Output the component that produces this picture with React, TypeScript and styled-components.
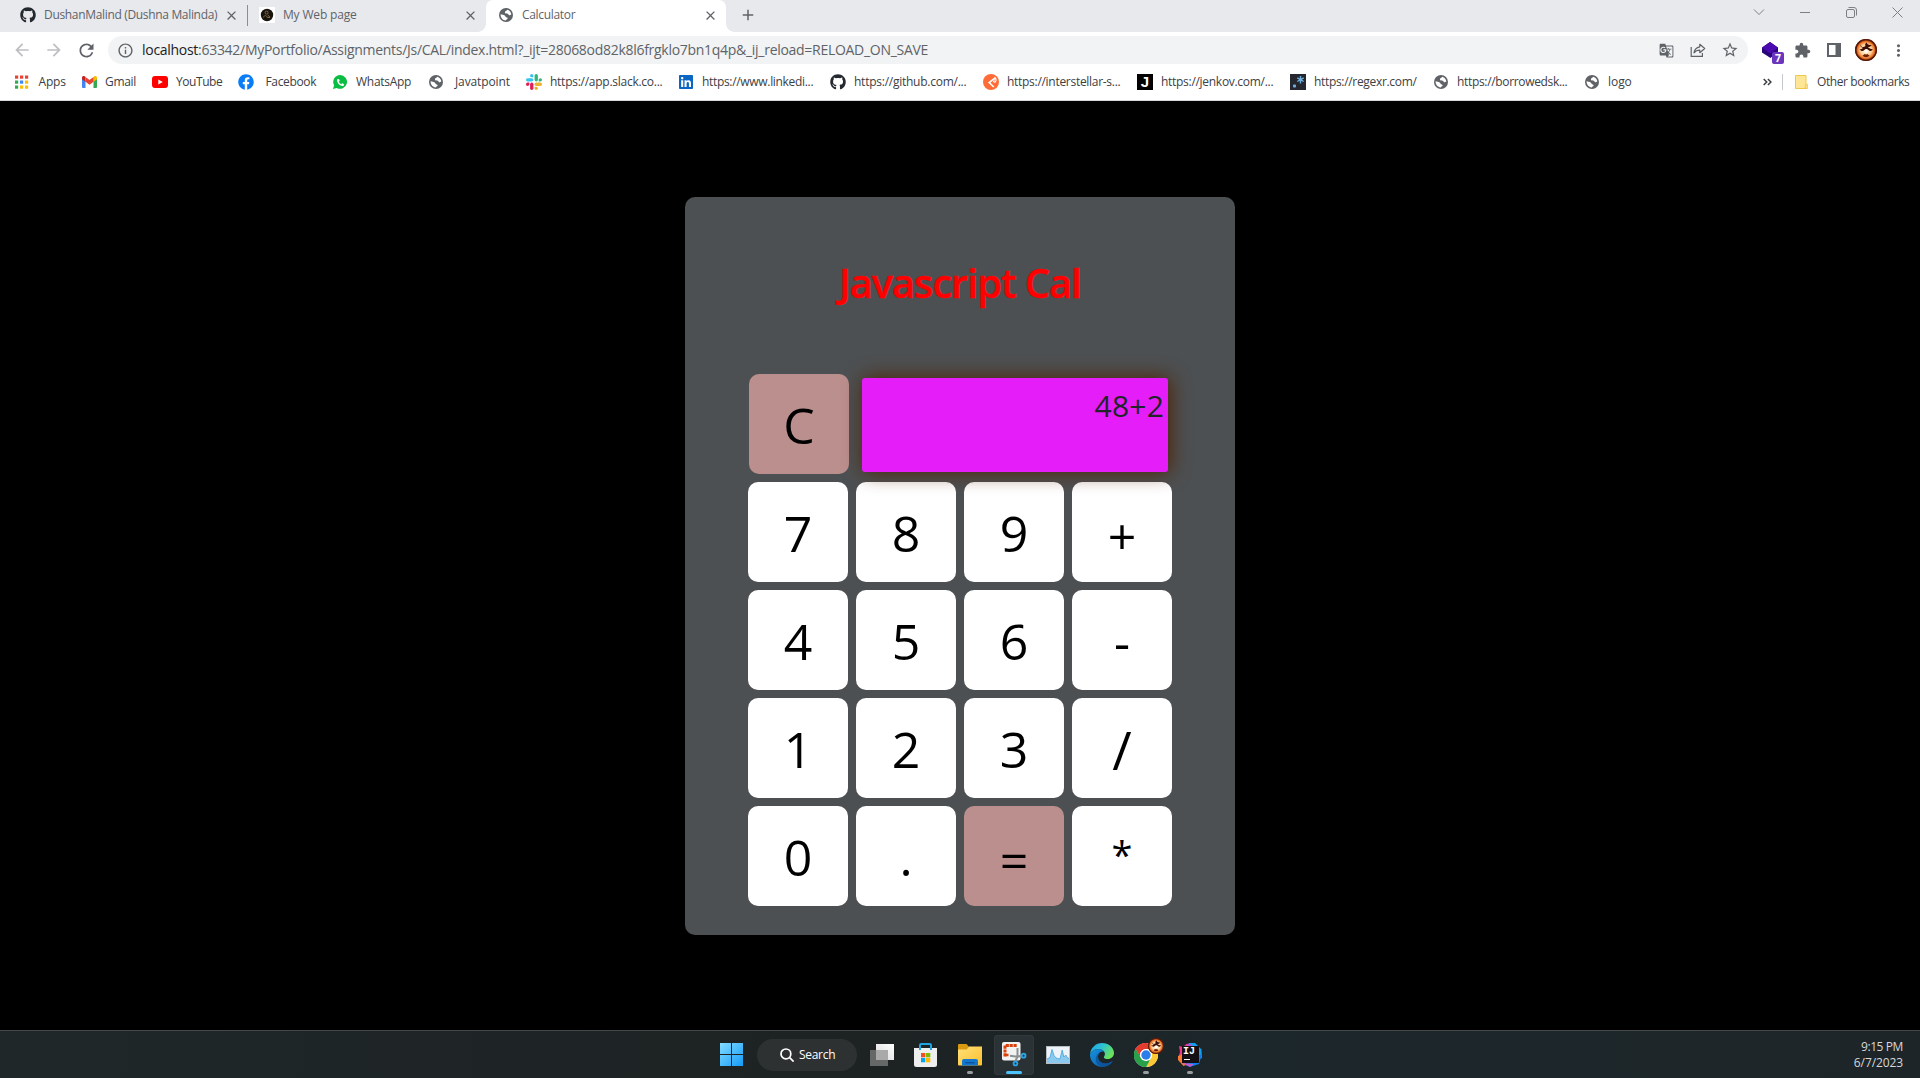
import React from "react";
import styled, { createGlobalStyle, css } from "styled-components";
import {
  MdAdd,
  MdArrowBack,
  MdArrowForward,
  MdClose,
  MdExtension,
  MdGTranslate,
  MdInfoOutline,
  MdMoreVert,
  MdRefresh,
  MdStarBorder,
} from "react-icons/md";
import { FaFacebook, FaGithub, FaLinkedin, FaPhoneAlt } from "react-icons/fa";

const uiFont = `"Segoe UI", "Open Sans", "Noto Sans", sans-serif`;

const GlobalStyle = createGlobalStyle`
  * { box-sizing: border-box; }
  body { margin: 0; background: #000; font-family: ${uiFont}; }
  svg { display: block; flex: none; }
`;

const Screen = styled.div`
  display: flex;
  flex-direction: column;
  height: 1078px;
  overflow: hidden;
  background: #000;
`;

/* ---------- browser window ---------- */

const Browser = styled.header`
  display: flex;
  flex-direction: column;
  height: 101px;
  background: #fff;
  border-bottom: 1px solid #d5d7da;
  color: #5f6368;
`;

const TabStrip = styled.div`
  display: flex;
  height: 32px;
  padding-left: 8px;
  background: #e8e9ed;
`;

const Tab = styled.div<{ $active?: boolean; $divided?: boolean }>`
  position: relative;
  display: flex;
  align-items: center;
  width: ${(p) => (p.$active ? 240 : 239)}px;
  height: 32px;
  padding: 0 7px 2px 12px;
  ${(p) =>
    p.$divided &&
    css`
      &::before {
        content: "";
        position: absolute;
        left: 0;
        top: 5px;
        width: 1px;
        height: 21px;
        background: #8a8d91;
      }
    `}
  ${(p) =>
    p.$active &&
    css`
      background: #fff;
      border-radius: 7px 7px 0 0;
      &::before,
      &::after {
        content: "";
        position: absolute;
        bottom: 0;
        width: 8px;
        height: 8px;
      }
      &::before {
        left: -8px;
        background: radial-gradient(circle at 0 0, transparent 7.5px, #fff 8px);
      }
      &::after {
        right: -8px;
        background: radial-gradient(circle at 100% 0, transparent 7.5px, #fff 8px);
      }
    `}
`;

const Favicon = styled.span`
  display: flex;
  align-items: center;
  justify-content: center;
  flex: none;
  width: 16px;
  height: 16px;
`;

const TabTitle = styled.span<{ $tracking: number }>`
  flex: 1;
  margin-left: 8px;
  font-size: 12px;
  line-height: 16px;
  letter-spacing: ${(p) => p.$tracking}px;
  white-space: nowrap;
`;

const CloseTab = styled.span`
  display: flex;
  flex: none;
  margin-right: 1px;
`;

const NewTab = styled.div`
  display: flex;
  align-items: center;
  justify-content: center;
  width: 44px;
  height: 30px;
`;

const WindowButtons = styled.div`
  display: flex;
  align-items: center;
  height: 24px;
  margin-left: auto;
  color: #7d8083;
`;

const WindowButton = styled.span`
  display: flex;
  justify-content: center;
  width: 46px;
`;

const Toolbar = styled.div`
  display: flex;
  align-items: center;
  height: 36px;
  padding: 0 6px;
`;

const Tool = styled.span<{ $muted?: boolean }>`
  position: relative;
  display: flex;
  align-items: center;
  justify-content: center;
  flex: none;
  width: 32px;
  height: 28px;
  color: ${(p) => (p.$muted ? "#bcbec0" : "#5f6368")};
`;

const AddressBar = styled.div`
  display: flex;
  align-items: center;
  flex: 1;
  height: 28px;
  margin: 0 6px;
  padding: 0 2px 0 9px;
  border-radius: 14px;
  background: #f1f3f4;
`;

const Address = styled.span`
  flex: 1;
  margin-left: 8px;
  font-size: 14px;
  line-height: 20px;
  letter-spacing: -0.287px;
  white-space: nowrap;
`;

const Host = styled.span`
  color: #202124;
`;

const ExtensionBadge = styled.span`
  position: absolute;
  left: 18px;
  top: 16px;
  width: 12px;
  height: 12px;
  border-radius: 2px;
  background: #6b35bd;
  color: #fff;
  font-size: 10.5px;
  font-weight: 700;
  line-height: 12px;
  text-align: center;
`;

const Bookmarks = styled.nav`
  display: flex;
  align-items: center;
  height: 28px;
  padding: 0 9px 0 14px;
`;

const Bookmark = styled.a<{ $width: number; $tracking: number; $indent?: number }>`
  display: flex;
  align-items: center;
  flex: none;
  gap: ${(p) => p.$indent ?? 8}px;
  width: ${(p) => p.$width}px;
  color: #3c4043;
  font-size: 12px;
  line-height: 16px;
  letter-spacing: ${(p) => p.$tracking}px;
  white-space: nowrap;
`;

const MoreBookmarks = styled.div`
  display: flex;
  align-items: center;
  margin-left: auto;
`;

const Divider = styled.span`
  width: 1px;
  height: 16px;
  margin: 0 12px 0 10px;
  background: #c4c7cb;
`;

const FolderLabel = styled.span`
  margin-left: 9px;
`;

const JenkovIcon = styled.span`
  width: 16px;
  height: 16px;
  background: #000;
  color: #fff;
  font: 700 15px/16px "Liberation Sans", sans-serif;
  letter-spacing: 0;
  text-align: center;
`;

/* ---------- calculator ---------- */

const Page = styled.main`
  display: flex;
  flex: 1;
  align-items: flex-start;
  justify-content: center;
  padding-top: 96px;
  background: #000;
`;

const Calculator = styled.section`
  width: 550px;
  height: 738px;
  padding: 59px 63px 0;
  border-radius: 10px;
  background: #4d5052;
`;

const Title = styled.h1`
  margin: 0 0 64px;
  color: #f00;
  font-size: 40px;
  font-weight: 600;
  line-height: 54px;
  letter-spacing: -1.17px;
  text-align: center;
  white-space: nowrap;
  -webkit-text-stroke: 0.4px #f00;
`;

const DisplayRow = styled.div`
  display: flex;
  gap: 13px;
  height: 108px;
  padding-left: 1px;
`;

const Keypad = styled.div`
  display: grid;
  grid-template-columns: repeat(4, 100px);
  gap: 8px;
`;

const Key = styled.button<{ $accent?: boolean; $drop?: number; $size?: number }>`
  display: flex;
  align-items: flex-start;
  justify-content: center;
  width: 100px;
  height: 100px;
  padding: ${(p) => 20 + (p.$drop ?? 1)}px 0 0;
  border: 0;
  border-radius: 10px;
  background: ${(p) => (p.$accent ? "#bc8f8f" : "#fff")};
  color: #000;
  font-family: ${uiFont};
  font-size: ${(p) => p.$size ?? 50}px;
  line-height: 60px;
`;

const Display = styled.output`
  position: relative;
  z-index: 1;
  width: 306px;
  height: 94px;
  margin-top: 4px;
  padding-right: 4px;
  border-radius: 3px;
  background: #e51df8;
  box-shadow: 2px 0 20px rgb(79, 32, 2);
  color: #212529;
  font-size: 30px;
  line-height: 55px;
  letter-spacing: 0.2px;
  text-align: right;
`;

/* ---------- taskbar ---------- */

const Taskbar = styled.footer`
  display: flex;
  align-items: center;
  height: 48px;
  padding: 0 17px 0 709px;
  border-top: 1px solid #454849;
  background: linear-gradient(90deg, #1f2729 0%, #1d2222 45%, #1c272b 65%, #1e2528 100%);
`;

const TaskItem = styled.div<{ $running?: boolean; $active?: boolean }>`
  position: relative;
  display: flex;
  align-items: center;
  justify-content: center;
  width: 44px;
  height: 47px;
  ${(p) =>
    p.$active &&
    css`
      width: 40px;
      height: 40px;
      margin: 0 2px;
      border-radius: 4px;
      background: #2a3235;
      box-shadow: inset 0 0 0 1px #32393c;
    `}
  ${(p) =>
    (p.$running || p.$active) &&
    css`
      &::after {
        content: "";
        position: absolute;
        bottom: ${p.$active ? 1 : 4}px;
        left: calc(50% - ${p.$active ? 8 : 3}px);
        width: ${p.$active ? 16 : 6}px;
        height: 3px;
        border-radius: 2px;
        background: ${p.$active ? "#4cc2ff" : "#9a9d9e"};
      }
    `}
`;

const Search = styled.div`
  display: flex;
  align-items: center;
  width: 100px;
  height: 32px;
  margin: 0 3px 0 4px;
  padding-left: 23px;
  gap: 5px;
  border-radius: 16px;
  background: #2d3132;
  color: #fff;
  font-size: 12px;
  letter-spacing: -0.3px;
`;

const Clock = styled.div`
  display: flex;
  flex-direction: column;
  align-items: flex-end;
  margin-left: auto;
  color: #d6d8d9;
  font-size: 12px;
  line-height: 16px;
  letter-spacing: -0.1px;
`;

const ClockTime = styled.span`
  letter-spacing: -0.4px;
`;

/* ---------- drawings ---------- */

const GlobeIcon = () => (
  <svg width="14" height="14" viewBox="0 0 14 14">
    <circle cx="7" cy="7" r="7" fill="#5f6368" />
    <path
      d="M8.200 1.800c-.5 1.100-2.300 1.300-2.300 2.700 0 1.200 1.700 1 2.800 1.200.9.200.6 1.500 1.600 1.600.8.100 1-.5 2-.5-.1-2.500-1.800-4.500-4.100-5zM1.600 6.300c1.400.6 2.900.4 4.100 1.200 1 .7.600 1.500 1.500 1.800.8.300 1.500.3 1.400 1.200-.1.900-1.500.9-1.800 1.900-3.100-.1-5.400-2.900-5.200-6.100z"
      fill="#fff"
    />
  </svg>
);

const WebPageIcon = () => (
  <svg width="16" height="16" viewBox="0 0 16 16">
    <rect width="16" height="16" fill="#fff" />
    <circle cx="8" cy="8" r="6.2" fill="#17130f" />
    <circle cx="7.6" cy="5.6" r="1.5" fill="none" stroke="#85683c" />
    <path d="M4.3 10.5c1.2-2.6 3-2.6 4 0h2.8M8.7 8.2l2.4 1.6" fill="none" stroke="#85683c" />
  </svg>
);

const AppsIcon = () => {
  const colors = ["#ea4335", "#ea4335", "#ea4335", "#34a853", "#4285f4", "#fbbc04", "#34a853", "#fbbc04", "#fbbc04"];
  return (
    <svg width="15" height="14" viewBox="0 0 15 14">
      {colors.map((c, i) => (
        <rect key={i} x={(i % 3) * 5} y={0.5 + Math.floor(i / 3) * 5} width="3.2" height="3.2" fill={c} />
      ))}
    </svg>
  );
};

const GmailIcon = () => (
  <svg width="15" height="12" viewBox="0 0 15 12">
    <path d="M0 2v9a1 1 0 0 0 1 1h2.5V4.5z" fill="#4285f4" />
    <path d="M15 2v9a1 1 0 0 1-1 1h-2.500V4.500z" fill="#34a853" />
    <path d="M11.500 1v4.800L15 3.200V1.800c0-1.600-1.800-2.200-2.900-1.300z" fill="#fbbc04" />
    <path d="M0 1.800v1.400l3.500 2.600V1L2.900.5C1.800-.4 0 .2 0 1.800z" fill="#c5221f" />
    <path d="M3.500 1l4 3 4-3v4.800l-4 3-4-3z" fill="#ea4335" />
  </svg>
);

const YouTubeIcon = () => (
  <svg width="16" height="12" viewBox="0 0 16 12">
    <rect width="16" height="12" rx="3" fill="#f00" />
    <path d="M6.300 3.400v5.200L10.800 6z" fill="#fff" />
  </svg>
);

const BubbleWrap = styled.span`
  display: grid;
  place-items: center;
  color: #fff;
  & > svg {
    grid-area: 1 / 1;
  }
`;

const WhatsAppIcon = () => (
  <BubbleWrap>
    <svg width="14" height="14" viewBox="0 0 14 14">
      <path d="M7.100 0a6.900 6.900 0 1 1-3.300 12.950L0 14l1.100-3.700A6.900 6.900 0 0 1 7.100 0z" fill="#0cbd44" />
    </svg>
    <FaPhoneAlt size={7} />
  </BubbleWrap>
);

const SlackIcon = () => (
  <svg width="16" height="16" viewBox="0 0 16 16">
    <g fill="#36c5f0">
      <rect x="0" y="4.200" width="7.300" height="3.300" rx="1.650" />
      <path d="M5.700 0a1.650 1.650 0 0 1 1.650 1.650V3.300H5.700a1.650 1.650 0 0 1 0-3.300z" />
    </g>
    <g fill="#2eb67d">
      <rect x="8.600" y="0" width="3.300" height="7.400" rx="1.650" />
      <path d="M16 5.800a1.650 1.650 0 0 1-1.650 1.650H12.700V5.800a1.650 1.650 0 0 1 3.300 0z" />
    </g>
    <g fill="#ecb22e">
      <rect x="8.600" y="8.600" width="7.400" height="3.300" rx="1.650" />
      <path d="M10.250 16A1.650 1.650 0 0 1 8.600 14.350V12.700h1.650a1.650 1.650 0 0 1 0 3.300z" />
    </g>
    <g fill="#e01e5a">
      <rect x="4.100" y="8.600" width="3.300" height="7.400" rx="1.650" />
      <path d="M0 10.250A1.650 1.650 0 0 1 1.650 8.600H3.300v1.650a1.650 1.650 0 0 1-3.300 0z" />
    </g>
  </svg>
);

const PostmanIcon = () => (
  <svg width="16" height="16" viewBox="0 0 16 16">
    <circle cx="8" cy="8" r="8" fill="#ff6c37" />
    <path d="M12.500 3.500L6.200 8.600l4.600 4.400" fill="none" stroke="#fff" strokeWidth="1.600" />
    <path d="M12.500 3.500c1.700 1.200 1.500 4.300-.6 5.600L9.800 7.800z" fill="#fff" />
    <path d="M12.300 5.600l-.6 1.900" stroke="#ff6c37" strokeWidth="1" />
  </svg>
);

const RegexrIcon = () => (
  <svg width="16" height="16" viewBox="0 0 16 16">
    <rect width="16" height="16" fill="#24272d" />
    <rect x="3" y="10.500" width="3" height="3" rx=".8" fill="#70b0e0" />
    <path d="M10.500 2v7.400M7.300 3.800l6.400 3.700M13.700 3.800L7.300 7.500" stroke="#70b0e0" strokeWidth="1.400" />
  </svg>
);

const FolderIcon = () => (
  <svg width="13" height="14" viewBox="0 0 13 14">
    <path d="M.5.500h10.500v8.700h1.300v4.300H.500z" fill="#ffe596" stroke="#edc84e" />
    <path d="M10.300 13.500V9.500" stroke="#edc84e" />
  </svg>
);

const ShareIcon = () => (
  <svg width="16" height="16" viewBox="0 0 16 16" fill="none" stroke="#5f6368" strokeWidth="1.200">
    <path d="M1.200 5v9.400h11.200V11" />
    <path d="M9.800 2.300l4.900 4.200-4.900 4.200V8.200C7.200 8.200 5.500 9 4 10.900c.4-3.200 2.300-5.500 5.800-6.100z" strokeLinejoin="round" />
  </svg>
);

const CubeIcon = () => (
  <svg width="16" height="16" viewBox="0 0 16 16">
    <path d="M0 5.500L8 0l8 5.500v4.200L8.500 16 0 10.500z" fill="#2a067b" />
    <path d="M0 5.700L8 0l8 5.700-7.800 5.800z" fill="#4b0ab0" />
  </svg>
);

const SidePanelIcon = () => (
  <svg width="14" height="14" viewBox="0 0 14 14">
    <path d="M0 0h14v14H0zM2 2v10h6.500V2z" fill="#5f6368" fillRule="evenodd" />
  </svg>
);

const Avatar = ({ size, id }: { size: number; id: string }) => (
  <svg width={size} height={size} viewBox="0 0 22 22">
    <defs>
      <radialGradient id={id}>
        <stop offset="0" stopColor="#fff6df" />
        <stop offset=".5" stopColor="#ffd3a0" />
        <stop offset=".75" stopColor="#f07a2a" />
        <stop offset="1" stopColor="#5a1604" />
      </radialGradient>
    </defs>
    <circle cx="11" cy="11" r="11" fill={`url(#${id})`} />
    <circle cx="11" cy="11" r="10.300" fill="none" stroke="#5a1807" strokeWidth="1.300" />
    <path d="M5 5.500c2 3.500 3.700 2.800 5.500 1.600C9.700 5.500 10.200 4.300 12 3.500c-.4 2 2.500 2.800 4.700 2.600-1 1.500-2.300 2.200-3.900 2.100 1.900 1.200 3.400 2.300 4.900 1.800-1 2.400-2.900 2.700-4.200 1-1-1.300-3.200-1.300-4.200.1-1.300 1.700-3.600 1.200-4.700-1 1.600.3 2.800-.3 3.400-1.300C6.500 8.500 5.200 7.500 5 5.500z" fill="#3a0f06" />
    <path d="M7.500 16.500c1 0 1.600-1.500 2.500-1.500.7.8 1.500.8 2.100 0 1 .2 1.500 1.500 2.500 1.500-1.600 2.200-5.500 2.300-7.100 0z" fill="#6e1f08" />
    <path d="M9.300 11.500c1.200-1.400 2.500-1.100 3.500.2l-.5 2H9.800z" fill="#fff" />
  </svg>
);

const StartIcon = () => (
  <svg width="23" height="23" viewBox="0 0 23 23">
    <defs>
      <linearGradient id="start" x1="0" y1="0" x2="1" y2="1">
        <stop offset="0" stopColor="#83dcff" />
        <stop offset="1" stopColor="#149bf8" />
      </linearGradient>
    </defs>
    <path d="M0 0h11v11H0zM12 0h11v11H12zM0 12h11v11H0zM12 12h11v11H12z" fill="url(#start)" />
  </svg>
);

const SearchIcon = () => (
  <svg width="14" height="14" viewBox="0 0 14 14" fill="none" stroke="#fff" strokeWidth="1.700">
    <circle cx="5.900" cy="5.900" r="4.900" />
    <path d="M9.400 9.400l4.200 4.200" />
  </svg>
);

const TaskViewIcon = () => (
  <svg width="24" height="22" viewBox="0 0 24 22">
    <defs>
      <linearGradient id="tv" x1="1" y1="0" x2="0" y2="1">
        <stop offset="0" stopColor="#fff" />
        <stop offset="1" stopColor="#d8d8d8" />
      </linearGradient>
    </defs>
    <rect x="0" y="6" width="18" height="16" fill="#666868" />
    <rect x="6" y="0" width="18" height="16" fill="url(#tv)" />
    <rect x="6" y="6" width="12" height="10" fill="#a9a9a9" />
  </svg>
);

const StoreIcon = () => (
  <svg width="24" height="24" viewBox="0 0 24 24">
    <path d="M0 5h23v16.500A2.500 2.500 0 0 1 20.500 24h-18A2.500 2.500 0 0 1 0 21.500z" fill="#eee" />
    <path d="M6 7V2.200C6 1.500 6.500 1 7.200 1h8.600c.7 0 1.200.5 1.200 1.200V7" fill="none" stroke="#1fa6e2" strokeWidth="2" />
    <rect x="7" y="10" width="4.300" height="4.300" fill="#f25022" />
    <rect x="12" y="10" width="4.300" height="4.300" fill="#7fba00" />
    <rect x="7" y="15" width="4.300" height="4.300" fill="#00a4ef" />
    <rect x="12" y="15" width="4.300" height="4.300" fill="#ffb900" />
  </svg>
);

const ExplorerIcon = () => (
  <svg width="24" height="22" viewBox="0 0 24 22">
    <defs>
      <linearGradient id="fold" x1="0" y1="0" x2="1" y2="1">
        <stop offset="0" stopColor="#ffe07a" />
        <stop offset="1" stopColor="#fbc02d" />
      </linearGradient>
    </defs>
    <path d="M0 1.200C0 .5.500 0 1.200 0h7.300l2.200 2.500v4H0z" fill="#d99a10" />
    <path d="M0 5.500h8.800L11 2.500h13V20.500a1 1 0 0 1-1 1H1a1 1 0 0 1-1-1z" fill="url(#fold)" />
    <path d="M4 17a2 2 0 0 1 2-2h12a2 2 0 0 1 2 2v4.600H4z" fill="#1477cf" />
    <rect x="7.500" y="18" width="9" height="1.400" fill="#0b5396" />
  </svg>
);

const SnipIcon = () => (
  <svg width="26" height="25" viewBox="0 0 26 25">
    <rect x="1" y="0" width="18.500" height="18.500" rx="2" fill="#f2f2f2" />
    <path d="M4 14.500V3.500h12" fill="none" stroke="#d9400b" strokeWidth="3" strokeDasharray="3.200 .7" />
    <path d="M4 13h3.500" stroke="#d9400b" strokeWidth="2.500" />
    <path d="M16.500 6v8.500l-2 4.500M9 13.800l7.500 1 4-1" fill="none" stroke="#8a8f92" strokeWidth="2" />
    <circle cx="22.600" cy="13.700" r="1.900" fill="none" stroke="#2aa4e5" strokeWidth="1.900" />
    <circle cx="14.500" cy="21.500" r="1.900" fill="none" stroke="#2aa4e5" strokeWidth="1.900" />
  </svg>
);

const MonitorIcon = () => (
  <svg width="24" height="18" viewBox="0 0 24 18">
    <rect x=".5" y=".5" width="23" height="17" fill="#edf3f8" stroke="#b6bdc3" />
    <path d="M1 17V13l3-1.500L6 3.500l2 6 1.500 2 2 1 2.500.5L16.200 4l1.600 7 2-2 1.700 3 1.500.5V17z" fill="#8cc9ee" />
    <path d="M1 13l3-1.500L6 3.500l2 6 1.500 2 2 1 2.500.5L16.200 4l1.600 7 2-2 1.700 3 1.500.5" fill="none" stroke="#4ea8dc" strokeWidth=".9" />
  </svg>
);

const EdgeIcon = () => (
  <svg width="24" height="24" viewBox="0 0 24 24">
    <defs>
      <linearGradient id="edgeTop" x1="0" y1="0" x2="1" y2=".5">
        <stop offset="0" stopColor="#1e9fe4" />
        <stop offset=".5" stopColor="#2cc3d2" />
        <stop offset="1" stopColor="#6ce15a" />
      </linearGradient>
      <linearGradient id="edgeLow" x1="0" y1="0" x2="1" y2="1">
        <stop offset="0" stopColor="#1691df" />
        <stop offset="1" stopColor="#0c59a4" />
      </linearGradient>
    </defs>
    <path d="M.1 11C.8 4.700 5.700 0 12 0c6.800 0 12 4.600 12 10 0 3.600-2.800 6-6.200 6-2.600 0-4-.9-4-1.800 0-.6 1.100-1.100 1.100-3.100C14.900 8.200 11.800 6 8.500 6 4.500 6 1.500 8 .1 11z" fill="url(#edgeTop)" />
    <path d="M.1 11C1.500 8 4.500 6 8.500 6c2.500 0 4.600 1.200 5.700 2.900C12.800 7.700 8.700 8.600 8 13c-.6 4.400 3.500 8.300 8.500 7.400 2.500-.4 4.200-1.300 5.500-1.900.4-.1.700.2.400.6C20.200 22.200 16.500 24 12 24 5.400 24-.5 18.500.1 11z" fill="url(#edgeLow)" />
    <path d="M8 13c-.6 4.400 3.500 8.300 8.500 7.400 2.500-.4 4.200-1.300 5.500-1.900.4-.1.700.2.400.6C20.200 22.200 16.500 24 12.500 24 8.500 23.500 5.500 20 5.800 15.500c.2-3.300 2.700-5.800 5-7C9.500 9.500 8.300 11 8 13z" fill="#0b4f97" opacity=".75" />
  </svg>
);

const ChromeWrap = styled.span`
  position: relative;
  display: flex;
`;

const ChromeBadge = styled.span`
  position: absolute;
  left: 14px;
  top: -5px;
`;

const ChromeIcon = () => (
  <ChromeWrap>
    <svg width="24" height="24" viewBox="0 0 24 24">
      <circle cx="12" cy="12" r="12" fill="#fff" />
      <path d="M12 0a12 12 0 0 1 10.400 6H12a6 6 0 0 0-5.200 3L1.600 6A12 12 0 0 1 12 0z" fill="#e33b2e" />
      <path d="M1.600 6l5.200 9L12 18l5.200-3L12 24A12 12 0 0 1 1.600 6z" fill="#2aa04b" />
      <path d="M22.400 6A12 12 0 0 1 12 24l5.200-9A6 6 0 0 0 12 6z" fill="#fcc934" />
      <path d="M1.600 6A12 12 0 0 1 12 0v6a6 6 0 0 0-5.200 9z" fill="#e33b2e" />
      <path d="M1.600 6A12 12 0 0 0 12 24l3-5.200A6 6 0 0 1 6.800 15z" fill="#2aa04b" />
      <circle cx="12" cy="12" r="6" fill="#fff" />
      <circle cx="12" cy="12" r="4.700" fill="#2b7de9" />
    </svg>
    <ChromeBadge>
      <Avatar size={16} id="chromeAvatar" />
    </ChromeBadge>
  </ChromeWrap>
);

const IntelliJWrap = styled.span`
  display: grid;
  place-items: center;
  & > * {
    grid-area: 1 / 1;
  }
`;

const IntelliJLabel = styled.span`
  width: 17px;
  height: 17px;
  padding-left: 1.5px;
  background: linear-gradient(#fff, #fff) 2px 13px / 6px 1.200px no-repeat #140f14;
  color: #fff;
  font: 700 10px/12px "Liberation Mono", monospace;
`;

const IntelliJIcon = () => (
  <IntelliJWrap>
    <svg width="24" height="24" viewBox="0 0 24 24">
      <path d="M1 3l4 1 4-3.500L12 3 8 12 4 17 .5 14 2 9z" fill="#f5358a" />
      <path d="M0 13l5-2 3 11-2.500 1L0 17z" fill="#fb7b33" />
      <path d="M11 0l6 0 6.500 6.500L24 15l-5 2-8-9z" fill="#0fa1ef" />
      <path d="M24 11l-3 10-9 3-5-2 6-6z" fill="#087cf0" />
      <path d="M11 0L6 6l4 6 6-8z" fill="#a957d8" />
      <path d="M4 20l8 4 4-3z" fill="#c757c4" />
    </svg>
    <IntelliJLabel>IJ</IntelliJLabel>
  </IntelliJWrap>
);

/* ---------- data ---------- */

type BookmarkEntry = { label: string; icon: React.ReactNode; width: number; tracking: number; indent?: number };

const bookmarks: BookmarkEntry[] = [
  { label: "Apps", icon: <AppsIcon />, width: 67, tracking: -0.2, indent: 8.5 },
  { label: "Gmail", icon: <GmailIcon />, width: 71, tracking: -0.3 },
  { label: "YouTube", icon: <YouTubeIcon />, width: 86, tracking: -0.43 },
  { label: "Facebook", icon: <FaFacebook size={16} color="#0a7cf5" />, width: 94, tracking: -0.34, indent: 11.5 },
  { label: "WhatsApp", icon: <WhatsAppIcon />, width: 96, tracking: -0.28 },
  { label: "Javatpoint", icon: <GlobeIcon />, width: 98, tracking: -0.12, indent: 11 },
  { label: "https://app.slack.co...", icon: <SlackIcon />, width: 152, tracking: -0.26 },
  { label: "https://www.linkedi...", icon: <FaLinkedin size={16} color="#0a66c2" />, width: 152, tracking: -0.32 },
  { label: "https://github.com/...", icon: <FaGithub size={16} color="#24292f" />, width: 153, tracking: -0.25 },
  { label: "https://interstellar-s...", icon: <PostmanIcon />, width: 154, tracking: -0.29 },
  { label: "https://jenkov.com/...", icon: <JenkovIcon>J</JenkovIcon>, width: 153, tracking: -0.29 },
  { label: "https://regexr.com/", icon: <RegexrIcon />, width: 143, tracking: -0.32 },
  { label: "https://borrowedsk...", icon: <GlobeIcon />, width: 151, tracking: -0.33 },
  { label: "logo", icon: <GlobeIcon />, width: 60, tracking: -0.05 },
];

type KeySpec = { label: string; drop?: number; size?: number; accent?: boolean };

const keys: KeySpec[] = [
  { label: "7" },
  { label: "8" },
  { label: "9" },
  { label: "+", drop: 4 },
  { label: "4" },
  { label: "5" },
  { label: "6" },
  { label: "-", drop: 2 },
  { label: "1" },
  { label: "2" },
  { label: "3" },
  { label: "/", drop: 2, size: 53 },
  { label: "0" },
  { label: "." },
  { label: "=", drop: 4, accent: true },
  { label: "*", drop: -2, size: 38 },
];

export default function App() {
  return (
    <Screen>
      <GlobalStyle />
      <Browser>
        <TabStrip>
          <Tab>
            <Favicon><FaGithub size={16} color="#24292f" /></Favicon>
            <TabTitle $tracking={-0.33}>DushanMalind (Dushna Malinda)</TabTitle>
            <CloseTab><MdClose size={15} /></CloseTab>
          </Tab>
          <Tab $divided>
            <Favicon><WebPageIcon /></Favicon>
            <TabTitle $tracking={-0.17}>My Web page</TabTitle>
            <CloseTab><MdClose size={15} /></CloseTab>
          </Tab>
          <Tab $active>
            <Favicon><GlobeIcon /></Favicon>
            <TabTitle $tracking={-0.32}>Calculator</TabTitle>
            <CloseTab><MdClose size={15} /></CloseTab>
          </Tab>
          <NewTab><MdAdd size={18} /></NewTab>
          <WindowButtons>
            <WindowButton>
              <svg width="12" height="12" viewBox="0 0 12 12" fill="none" stroke="currentColor"><path d="M1 3.500l5 5 5-5" /></svg>
            </WindowButton>
            <WindowButton>
              <svg width="10" height="12" viewBox="0 0 10 12" fill="none" stroke="currentColor"><path d="M0 6.500h10" /></svg>
            </WindowButton>
            <WindowButton>
              <svg width="11" height="11" viewBox="0 0 11 11" fill="none" stroke="currentColor">
                <rect x=".5" y="2.500" width="8" height="8" rx="1.500" />
                <path d="M2.500 .5h5.500a2.500 2.500 0 0 1 2.500 2.500v5.500" />
              </svg>
            </WindowButton>
            <WindowButton>
              <svg width="11" height="11" viewBox="0 0 11 11" fill="none" stroke="currentColor"><path d="M.5.500l10 10M10.500.500l-10 10" /></svg>
            </WindowButton>
          </WindowButtons>
        </TabStrip>
        <Toolbar>
          <Tool $muted><MdArrowBack size={20} /></Tool>
          <Tool $muted><MdArrowForward size={20} /></Tool>
          <Tool><MdRefresh size={21} /></Tool>
          <AddressBar>
            <MdInfoOutline size={17} />
            <Address>
              <Host>localhost</Host>
              :63342/MyPortfolio/Assignments/Js/CAL/index.html?_ijt=28068od82k8l6frgklo7bn1q4p&amp;_ij_reload=RELOAD_ON_SAVE
            </Address>
            <Tool><MdGTranslate size={15} /></Tool>
            <Tool><ShareIcon /></Tool>
            <Tool><MdStarBorder size={18} /></Tool>
          </AddressBar>
          <Tool>
            <CubeIcon />
            <ExtensionBadge>7</ExtensionBadge>
          </Tool>
          <Tool><MdExtension size={17} /></Tool>
          <Tool><SidePanelIcon /></Tool>
          <Tool><Avatar size={22} id="profileAvatar" /></Tool>
          <Tool><MdMoreVert size={19} /></Tool>
        </Toolbar>
        <Bookmarks>
          {bookmarks.map((b) => (
            <Bookmark key={b.label} $width={b.width} $tracking={b.tracking} $indent={b.indent}>
              <Favicon>{b.icon}</Favicon>
              {b.label}
            </Bookmark>
          ))}
          <MoreBookmarks>
            <svg width="9" height="8" viewBox="0 0 9 8" fill="none" stroke="#3c4043" strokeWidth="1.500">
              <path d="M.7 1l3 3-3 3M4.900 1l3 3-3 3" />
            </svg>
            <Divider />
            <FolderIcon />
            <Bookmark as="span" $width={103} $tracking={-0.41} $indent={0}>
              <FolderLabel>Other bookmarks</FolderLabel>
            </Bookmark>
          </MoreBookmarks>
        </Bookmarks>
      </Browser>

      <Page>
        <Calculator>
          <Title>Javascript Cal</Title>
          <DisplayRow>
            <Key $accent>C</Key>
            <Display>48+2</Display>
          </DisplayRow>
          <Keypad>
            {keys.map((k) => (
              <Key key={k.label} $accent={k.accent} $drop={k.drop} $size={k.size}>
                {k.label}
              </Key>
            ))}
          </Keypad>
        </Calculator>
      </Page>

      <Taskbar>
        <TaskItem><StartIcon /></TaskItem>
        <Search>
          <SearchIcon />
          Search
        </Search>
        <TaskItem><TaskViewIcon /></TaskItem>
        <TaskItem><StoreIcon /></TaskItem>
        <TaskItem $running><ExplorerIcon /></TaskItem>
        <TaskItem $active><SnipIcon /></TaskItem>
        <TaskItem><MonitorIcon /></TaskItem>
        <TaskItem><EdgeIcon /></TaskItem>
        <TaskItem $running><ChromeIcon /></TaskItem>
        <TaskItem $running><IntelliJIcon /></TaskItem>
        <Clock>
          <ClockTime>9:15 PM</ClockTime>
          <span>6/7/2023</span>
        </Clock>
      </Taskbar>
    </Screen>
  );
}
